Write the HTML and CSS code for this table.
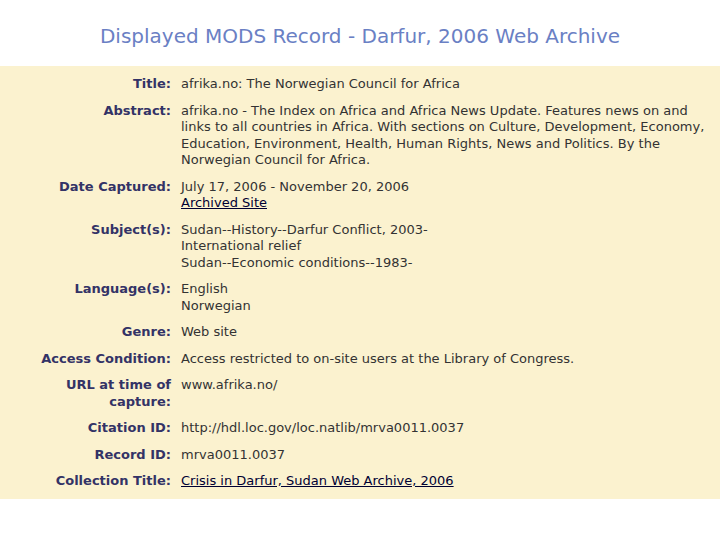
FILE: index.html
```html
<!DOCTYPE html>
<html>
<head>
<meta charset="utf-8">
<link rel="stylesheet" href="styles.css">
</head>
<body>
<header class="top">
  <h1 class="heading">Displayed MODS Record - Darfur, 2006 Web Archive</h1>
</header>
<main class="record">
  <dl class="fields">
    <dt>Title:</dt>
    <dd>afrika.no: The Norwegian Council for Africa</dd>
    <dt>Abstract:</dt>
    <dd>afrika.no - The Index on Africa and Africa News Update. Features news on and links to all countries in Africa. With sections on Culture, Development, Economy, Education, Environment, Health, Human Rights, News and Politics. By the Norwegian Council for Africa.</dd>
    <dt>Date Captured:</dt>
    <dd>July 17, 2006 - November 20, 2006<br><a href="#">Archived Site</a></dd>
    <dt>Subject(s):</dt>
    <dd>Sudan--History--Darfur Conflict, 2003-<br>International relief<br>Sudan--Economic conditions--1983-</dd>
    <dt>Language(s):</dt>
    <dd>English<br>Norwegian</dd>
    <dt>Genre:</dt>
    <dd>Web site</dd>
    <dt>Access Condition:</dt>
    <dd>Access restricted to on-site users at the Library of Congress.</dd>
    <dt>URL at time of capture:</dt>
    <dd>www.afrika.no/</dd>
    <dt>Citation ID:</dt>
    <dd>http://hdl.loc.gov/loc.natlib/mrva0011.0037</dd>
    <dt>Record ID:</dt>
    <dd>mrva0011.0037</dd>
    <dt>Collection Title:</dt>
    <dd><a href="#">Crisis in Darfur, Sudan Web Archive, 2006</a></dd>
  </dl>
</main>
</body>
</html>
```
FILE: styles.css
```css
html, body {
  margin: 0;
  padding: 0;
  background: #ffffff;
}
body {
  font-family: "DejaVu Sans", Verdana, sans-serif;
}
.top {
  height: 66px;
  display: flex;
  align-items: center;
  justify-content: center;
}
.heading {
  margin: 0;
  font-size: 20px;
  font-weight: normal;
  color: #6a80c4;
  position: relative;
  top: 3px;
}
.record {
  background: #fbf2cf;
  padding: 5px 0 4px 0;
}
.fields {
  margin: 0;
  display: grid;
  grid-template-columns: 171px 530px;
  column-gap: 10px;
  font-size: 13px;
  line-height: 16.5px;
}
.fields dt {
  text-align: right;
  font-weight: bold;
  color: #333366;
  padding: 5px 0 5px 20px;
}
.fields dd {
  margin: 0;
  color: #333333;
  padding: 5px 0;
}
.fields a {
  color: #000033;
  text-decoration: underline;
}
```
